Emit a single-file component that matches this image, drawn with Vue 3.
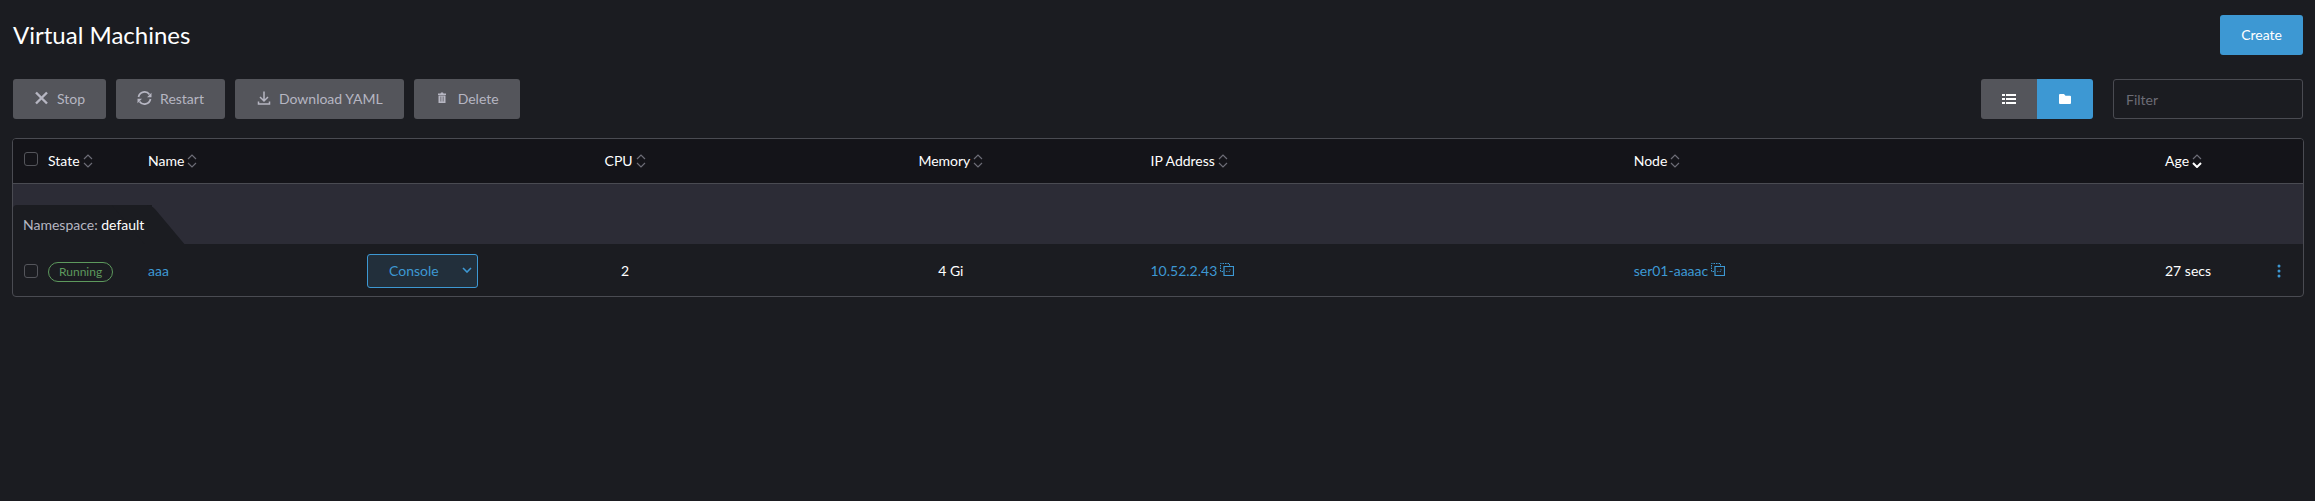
<script setup>
import { computed, ref } from 'vue'

const filter = ref('')
const grouped = ref(true)
const selected = ref([])

const columns = [
  { key: 'state', label: 'State' },
  { key: 'name', label: 'Name' },
  { key: 'console', label: '' },
  { key: 'cpu', label: 'CPU' },
  { key: 'memory', label: 'Memory' },
  { key: 'ip', label: 'IP Address' },
  { key: 'node', label: 'Node' },
  { key: 'age', label: 'Age' },
]
const sortBy = ref('age')

const rows = [
  { state: 'Running', name: 'aaa', cpu: 2, memory: '4 Gi', ip: '10.52.2.43', node: 'ser01-aaaac', age: '27 secs' },
]

const visibleRows = computed(() => rows.filter((r) => r.name.includes(filter.value)))
const allSelected = computed({
  get: () => selected.value.length > 0 && selected.value.length === rows.length,
  set: (on) => { selected.value = on ? rows.map((r) => r.name) : [] },
})
</script>

<template>
  <main class="page">
    <header class="title-row">
      <h1>Virtual Machines</h1>
      <button type="button" class="btn primary">Create</button>
    </header>

    <div class="toolbar">
      <div class="bulk">
        <button type="button" class="btn" :disabled="!selected.length">
          <svg class="icon" viewBox="0 0 16 16"><path d="M2 2.500l11 11M13 2.500l-11 11" stroke-width="2.4" /></svg>
          Stop
        </button>
        <button type="button" class="btn" :disabled="!selected.length">
          <svg class="icon" viewBox="0 0 16 16">
            <path d="M1.500 7A6.100 6.100 0 0 1 12.500 4.600M13.500 9A6.100 6.100 0 0 1 2.500 11.400" stroke-width="1.7" />
            <path class="solid" d="M14.500 2.800v4.500H10zM.5 13.200V8.700H5z" />
          </svg>
          Restart
        </button>
        <button type="button" class="btn" :disabled="!selected.length">
          <svg class="icon" viewBox="0 0 16 16"><path d="M8 1.500v9.300M4 7l4 4 4-4M2.500 11.500v2.500h11v-2.500" stroke-width="1.5" /></svg>
          Download YAML
        </button>
        <button type="button" class="btn" :disabled="!selected.length">
          <svg class="icon" viewBox="0 0 16 16">
            <path class="solid" d="M3 3.500h2.500l.5-1h2l.5 1H11V5H3zM3.500 5.500h7v7.500h-7z" />
            <path class="slits" d="M5.500 6.500v5M7 6.500v5M8.500 6.500v5" stroke-width=".5" />
          </svg>
          Delete
        </button>
      </div>
      <div class="search">
        <div class="toggle">
          <button type="button" aria-label="Flat list" :class="{ active: !grouped }" @click="grouped = false">
            <svg class="icon" viewBox="0 0 16 16">
              <path class="solid" d="M1 3h3v2H1zM5 3h10v2H5zM1 7h3v2H1zM5 7h10v2H5zM1 11h3v2H1zM5 11h10v2H5z" />
            </svg>
          </button>
          <button type="button" aria-label="Group by namespace" :class="{ active: grouped }" @click="grouped = true">
            <svg class="icon" viewBox="0 0 16 16">
              <path class="solid" d="M2 4a1 1 0 0 1 1-1h4l1.500 1.700H13a1 1 0 0 1 1 1V12a1 1 0 0 1-1 1H3a1 1 0 0 1-1-1z" />
            </svg>
          </button>
        </div>
        <input v-model="filter" type="search" class="filter" placeholder="Filter" aria-label="Filter">
      </div>
    </div>

    <div class="table-box">
      <table>
        <colgroup>
          <col class="c-check">
          <col v-for="c in columns" :key="c.key" :class="'c-' + c.key">
          <col class="c-menu">
        </colgroup>
        <thead>
          <tr>
            <th class="check"><input v-model="allSelected" type="checkbox" aria-label="Select all"></th>
            <th v-for="c in columns" :key="c.key" :class="'h-' + c.key">
              <button v-if="c.label" type="button" class="sort" @click="sortBy = c.key">
                {{ c.label }}
                <svg viewBox="0 0 10 14" :class="{ down: sortBy === c.key }">
                  <path d="M1 5l4-4 4 4" />
                  <path class="desc" d="M1 9l4 4 4-4" />
                </svg>
              </button>
            </th>
            <th></th>
          </tr>
        </thead>
        <tbody>
          <tr v-if="grouped" class="group">
            <td colspan="10">
              <div class="tab"><span>Namespace: <b>default</b></span></div>
            </td>
          </tr>
          <tr v-for="r in visibleRows" :key="r.name" class="row">
            <td class="check"><input v-model="selected" type="checkbox" :value="r.name" :aria-label="'Select ' + r.name"></td>
            <td><span class="badge">{{ r.state }}</span></td>
            <td><a href="#">{{ r.name }}</a></td>
            <td>
              <button type="button" class="console">
                Console
                <svg viewBox="0 0 10 6"><path d="M1 1l4 4 4-4" /></svg>
              </button>
            </td>
            <td class="centered">{{ r.cpu }}</td>
            <td class="centered">{{ r.memory }}</td>
            <td v-for="k in ['ip', 'node']" :key="k">
              <span class="copyable">
                <a href="#">{{ r[k] }}</a>
                <button type="button" class="copy" :aria-label="'Copy ' + r[k]">
                  <svg viewBox="0 0 14 14">
                    <path d="M4 3.500h9.500v9H4z" stroke-width="1.2" />
                    <path d="M3 8.500H.5v-8h9V3" stroke-dasharray="1.500 1" />
                    <path d="M6 8.500h4V6" stroke-dasharray="1.500 1" opacity=".7" />
                  </svg>
                </button>
              </span>
            </td>
            <td>{{ r.age }}</td>
            <td class="menu">
              <button type="button" aria-label="Actions">
                <svg viewBox="0 0 4 14"><circle cx="2" cy="2" r="1.500" /><circle cx="2" cy="7" r="1.500" /><circle cx="2" cy="12" r="1.500" /></svg>
              </button>
            </td>
          </tr>
        </tbody>
      </table>
    </div>
  </main>
</template>

<style>
body {
  background: #1b1c21;
}
</style>

<style scoped>
.page {
  padding: 15px 11px 15px 12px;
  color: #fff;
  font: 14px/20px Lato, sans-serif;
}
button, input {
  font: inherit;
  box-sizing: border-box;
}
button {
  border: 0;
  background: none;
  color: inherit;
  padding: 0;
  cursor: pointer;
}
svg {
  display: block;
  fill: none;
  stroke: currentColor;
}
.solid { fill: currentColor; stroke: none; }
.slits { stroke: #54555b; }
.icon { width: 16px; height: 16px; }
a { color: #3d98d3; text-decoration: none; }

.title-row, .toolbar {
  display: flex;
  align-items: center;
  justify-content: space-between;
  padding: 0 1px;
}
h1 {
  margin: 0;
  font-size: 24px;
  line-height: 28px;
  font-weight: 400;
}
.toolbar { margin: 24px 0 19px; }
.bulk { display: flex; gap: 10px; }
.btn {
  display: flex;
  align-items: center;
  gap: 7px;
  height: 40px;
  padding: 0 21px;
  border-radius: 3px;
  background: #54555b;
}
.btn .icon { margin-bottom: 2px; }
.btn:disabled { color: #b6b6c2; cursor: not-allowed; }
.btn.primary { background: #3d98d3; }
.search { display: flex; gap: 20px; }
.toggle { display: flex; }
.toggle button {
  display: flex;
  align-items: center;
  justify-content: center;
  width: 56px;
  height: 40px;
  background: #54555b;
  border-radius: 3px 0 0 3px;
}
.toggle button + button { border-radius: 0 3px 3px 0; }
.toggle button.active { background: #3d98d3; }
.filter {
  width: 190px;
  height: 40px;
  padding: 0 12px;
  border: 1px solid #4a4b52;
  border-radius: 3px;
  background: transparent;
  color: #fff;
}
.filter::placeholder { color: #6c6c76; }

.table-box {
  border: 1px solid #4a4b52;
  border-radius: 4px;
  overflow: hidden;
}
table {
  width: 100%;
  table-layout: fixed;
  border-collapse: separate;
  border-spacing: 0;
}
.c-check { width: 30px; }
.c-state { width: 100px; }
.c-name { width: 219px; }
.c-console { width: 132px; }
.c-cpu { width: 11.45%; }
.c-memory { width: 17%; }
.c-ip { width: 21.1%; }
.c-age { width: 100px; }
.c-menu { width: 43px; }
th, td {
  padding: 0 5px;
  text-align: left;
  font-weight: 400;
}
th {
  height: 42px;
  padding-bottom: 2px;
  background: #141419;
  border-bottom: 1px solid #4a4b52;
}
.h-cpu, .h-memory, .centered { text-align: center; }
.sort {
  display: inline-flex;
  align-items: center;
  gap: 3px;
  vertical-align: middle;
}
.sort svg {
  width: 10px;
  height: 14px;
  color: #6c6c76;
  stroke-width: 1.2;
}
.down .desc { stroke: #fff; stroke-width: 2; }
.check { padding: 0 0 0 11px; }
th.check { height: 40px; padding-bottom: 4px; }
.check input {
  appearance: none;
  display: block;
  width: 14px;
  height: 14px;
  margin: 0;
  border: 1px solid #54555b;
  border-radius: 3px;
}
.check input:checked { background: #3d98d3; }

.group td {
  padding: 21px 0 0;
  background: #2c2c36;
}
.tab {
  position: relative;
  display: table;
  height: 39px;
  padding: 0 8px 0 10px;
  line-height: 39px;
  background: #1b1c21;
  border-radius: 4px 0 0 0;
  color: #b6b6c2;
}
.tab::after {
  content: '';
  position: absolute;
  top: 0;
  right: -16px;
  width: 40px;
  height: 39px;
  background: #1b1c21;
  border-radius: 0 5px 0 0;
  transform: skewX(40deg);
}
.tab span { position: relative; z-index: 1; }
.tab b { font-weight: 400; color: #fff; }

.row td { height: 50px; padding-top: 2px; }
.badge {
  display: inline-block;
  padding: 0 10px;
  border: 1px solid #5d995d;
  border-radius: 10px;
  color: #5d995d;
  font-size: 12px;
  line-height: 18px;
  vertical-align: middle;
}
.console {
  display: flex;
  align-items: center;
  justify-content: space-between;
  width: 111px;
  height: 34px;
  padding: 0 5px 0 21px;
  border: 1px solid #3d98d3;
  border-radius: 3px;
  background: #222f3b;
  color: #3d98d3;
}
.console svg { width: 10px; height: 6px; margin-bottom: 2px; stroke-width: 1.6; }
.copyable {
  display: flex;
  align-items: center;
  gap: 3px;
}
.copy { color: #3d98d3; padding-bottom: 3px; }
.copy svg { width: 14px; height: 14px; }
.row .menu { padding-right: 11px; }
.menu button { display: block; margin: 0 auto; color: #3d98d3; }
.menu svg { width: 4px; height: 14px; fill: currentColor; stroke: none; }
</style>
